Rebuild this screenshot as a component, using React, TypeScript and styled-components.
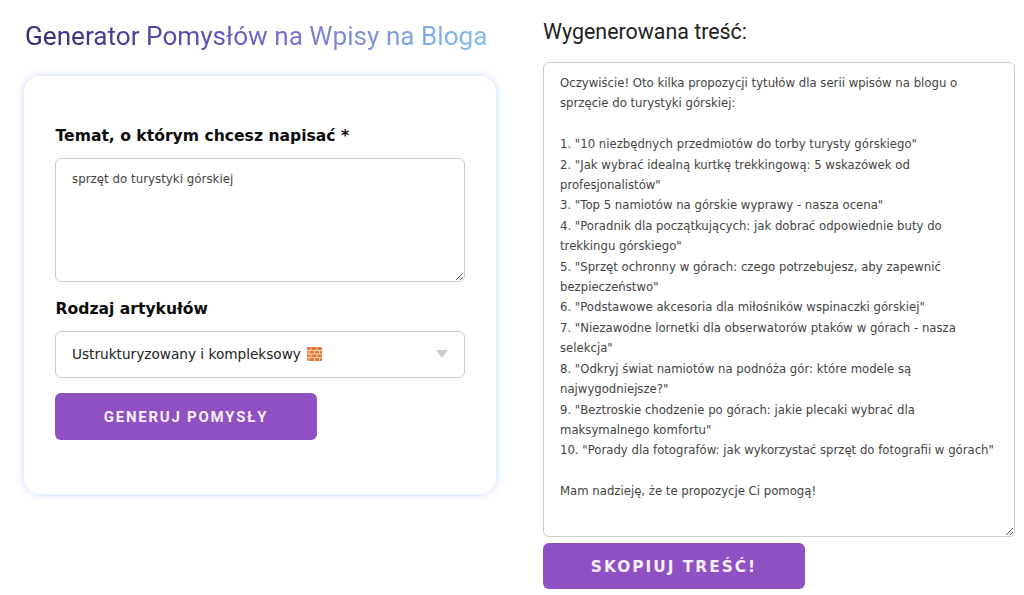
import React from "react";
import styled, { createGlobalStyle } from "styled-components";

const GlobalStyle = createGlobalStyle`
  html, body {
    margin: 0;
    padding: 0;
    background: #fff;
  }
  * {
    box-sizing: border-box;
  }
`;

const Page = styled.main`
  width: 1024px;
  height: 595px;
  overflow: hidden;
  display: grid;
  grid-template-columns: 472px 472px;
  column-gap: 47px;
  padding-left: 24px;
  align-items: start;
`;

const Column = styled.section`
  display: flex;
  flex-direction: column;
`;

const Title = styled.h1`
  margin: 19px 0 22px 1px;
  height: 35px;
  font: 400 26.15px/35px Roboto, sans-serif;
  width: max-content;
  background: linear-gradient(90deg, #2f2a78 0%, #5a55b8 40%, #7d83d6 65%, #7fc0ec 100%);
  -webkit-background-clip: text;
  background-clip: text;
  color: transparent;
`;

const Card = styled.form`
  height: 418px;
  padding: 50px 31px 0;
  background: #fff;
  border-radius: 16px;
  box-shadow: 0 0 8px rgba(120, 165, 245, 0.4);
  display: flex;
  flex-direction: column;
`;

const Label = styled.label`
  font: 700 15.6px/20px "DejaVu Sans", Verdana, sans-serif;
  color: #0c0c0c;
  margin-bottom: 12px;
  padding-left: 0.5px;
`;

const TextBox = styled.textarea<{ $height: number; $size: number; $line: number; $top: number }>`
  display: block;
  width: 100%;
  height: ${(p) => p.$height}px;
  padding: ${(p) => p.$top}px 16px;
  border: 1px solid #ccc;
  border-radius: 6px;
  outline: none;
  background: #fff;
  color: #444;
  font: 400 ${(p) => p.$size}px/${(p) => p.$line}px "DejaVu Sans", Verdana, sans-serif;
`;

const SelectBox = styled.div`
  height: 47px;
  padding: 0 16px 2px;
  border: 1px solid #ccc;
  border-radius: 6px;
  display: flex;
  align-items: center;
  gap: 6px;
  font: 400 13.65px/20px "DejaVu Sans", Verdana, sans-serif;
  color: #222;
`;

const Arrow = styled.span`
  margin-left: auto;
  width: 0;
  height: 0;
  border-left: 6px solid transparent;
  border-right: 6px solid transparent;
  border-top: 8px solid #ccc;
`;

const ActionButton = styled.button<{ $roboto?: boolean }>`
  width: 262px;
  height: 46.7px;
  border: 0;
  border-radius: 6px;
  background: #8e50c2;
  color: #f6effc;
  text-transform: uppercase;
  letter-spacing: ${(p) => (p.$roboto ? "1.75px" : "2px")};
  font: ${(p) =>
    p.$roboto
      ? "700 15px/20px Roboto, sans-serif"
      : '700 15.4px/20px "DejaVu Sans", Verdana, sans-serif'};
  padding: 2px 0 0;
`;

const Gap = styled.div<{ $size: number }>`
  height: ${(p) => p.$size}px;
`;

const ResultHeading = styled.h2`
  margin: 16px 0 15px;
  height: 31px;
  font: 400 21.4px/31px Roboto, sans-serif;
  color: #222;
`;

const Brick = () => (
  <svg width="15" height="14" viewBox="0 0 15 14" aria-hidden="true">
    <rect width="15" height="14" rx="1" fill="#e07b3a" />
    <path
      d="M0 3.5h15M0 7h15M0 10.5h15M4 0v3.5M10 0v3.5M2 3.5V7M7.5 3.5V7M12.5 3.5V7M4 7v3.5M10 7v3.5M2 10.5V14M7.5 10.5V14M12.5 10.5V14"
      stroke="#f6cfa8"
      strokeWidth="1"
      fill="none"
    />
  </svg>
);

const generated = `Oczywiście! Oto kilka propozycji tytułów dla serii wpisów na blogu o sprzęcie do turystyki górskiej:

1. "10 niezbędnych przedmiotów do torby turysty górskiego"
2. "Jak wybrać idealną kurtkę trekkingową: 5 wskazówek od profesjonalistów"
3. "Top 5 namiotów na górskie wyprawy - nasza ocena"
4. "Poradnik dla początkujących: jak dobrać odpowiednie buty do trekkingu górskiego"
5. "Sprzęt ochronny w górach: czego potrzebujesz, aby zapewnić bezpieczeństwo"
6. "Podstawowe akcesoria dla miłośników wspinaczki górskiej"
7. "Niezawodne lornetki dla obserwatorów ptaków w górach - nasza selekcja"
8. "Odkryj świat namiotów na podnóża gór: które modele są najwygodniejsze?"
9. "Beztroskie chodzenie po górach: jakie plecaki wybrać dla maksymalnego komfortu"
10. "Porady dla fotografów: jak wykorzystać sprzęt do fotografii w górach"

Mam nadzieję, że te propozycje Ci pomogą!`;

const App: React.FC = () => {
  return (
    <Page>
      <GlobalStyle />
      <Column>
        <Title>Generator Pomysłów na Wpisy na Bloga</Title>
        <Card>
          <Label>Temat, o którym chcesz napisać *</Label>
          <TextBox
            $height={124}
            $size={11.85}
            $line={20}
            $top={9.5}
            defaultValue="sprzęt do turystyki górskiej"
          />
          <Gap $size={17} />
          <Label>Rodzaj artykułów</Label>
          <SelectBox>
            Ustrukturyzowany i kompleksowy <Brick />
            <Arrow />
          </SelectBox>
          <Gap $size={15} />
          <ActionButton type="button" $roboto>
            Generuj pomysły
          </ActionButton>
        </Card>
      </Column>
      <Column>
        <ResultHeading>Wygenerowana treść:</ResultHeading>
        <TextBox $height={475} $size={11.7} $line={20.4} $top={10} defaultValue={generated} readOnly />
        <Gap $size={5.5} />
        <ActionButton type="button">Skopiuj treść!</ActionButton>
      </Column>
    </Page>
  );
};

export default App;
